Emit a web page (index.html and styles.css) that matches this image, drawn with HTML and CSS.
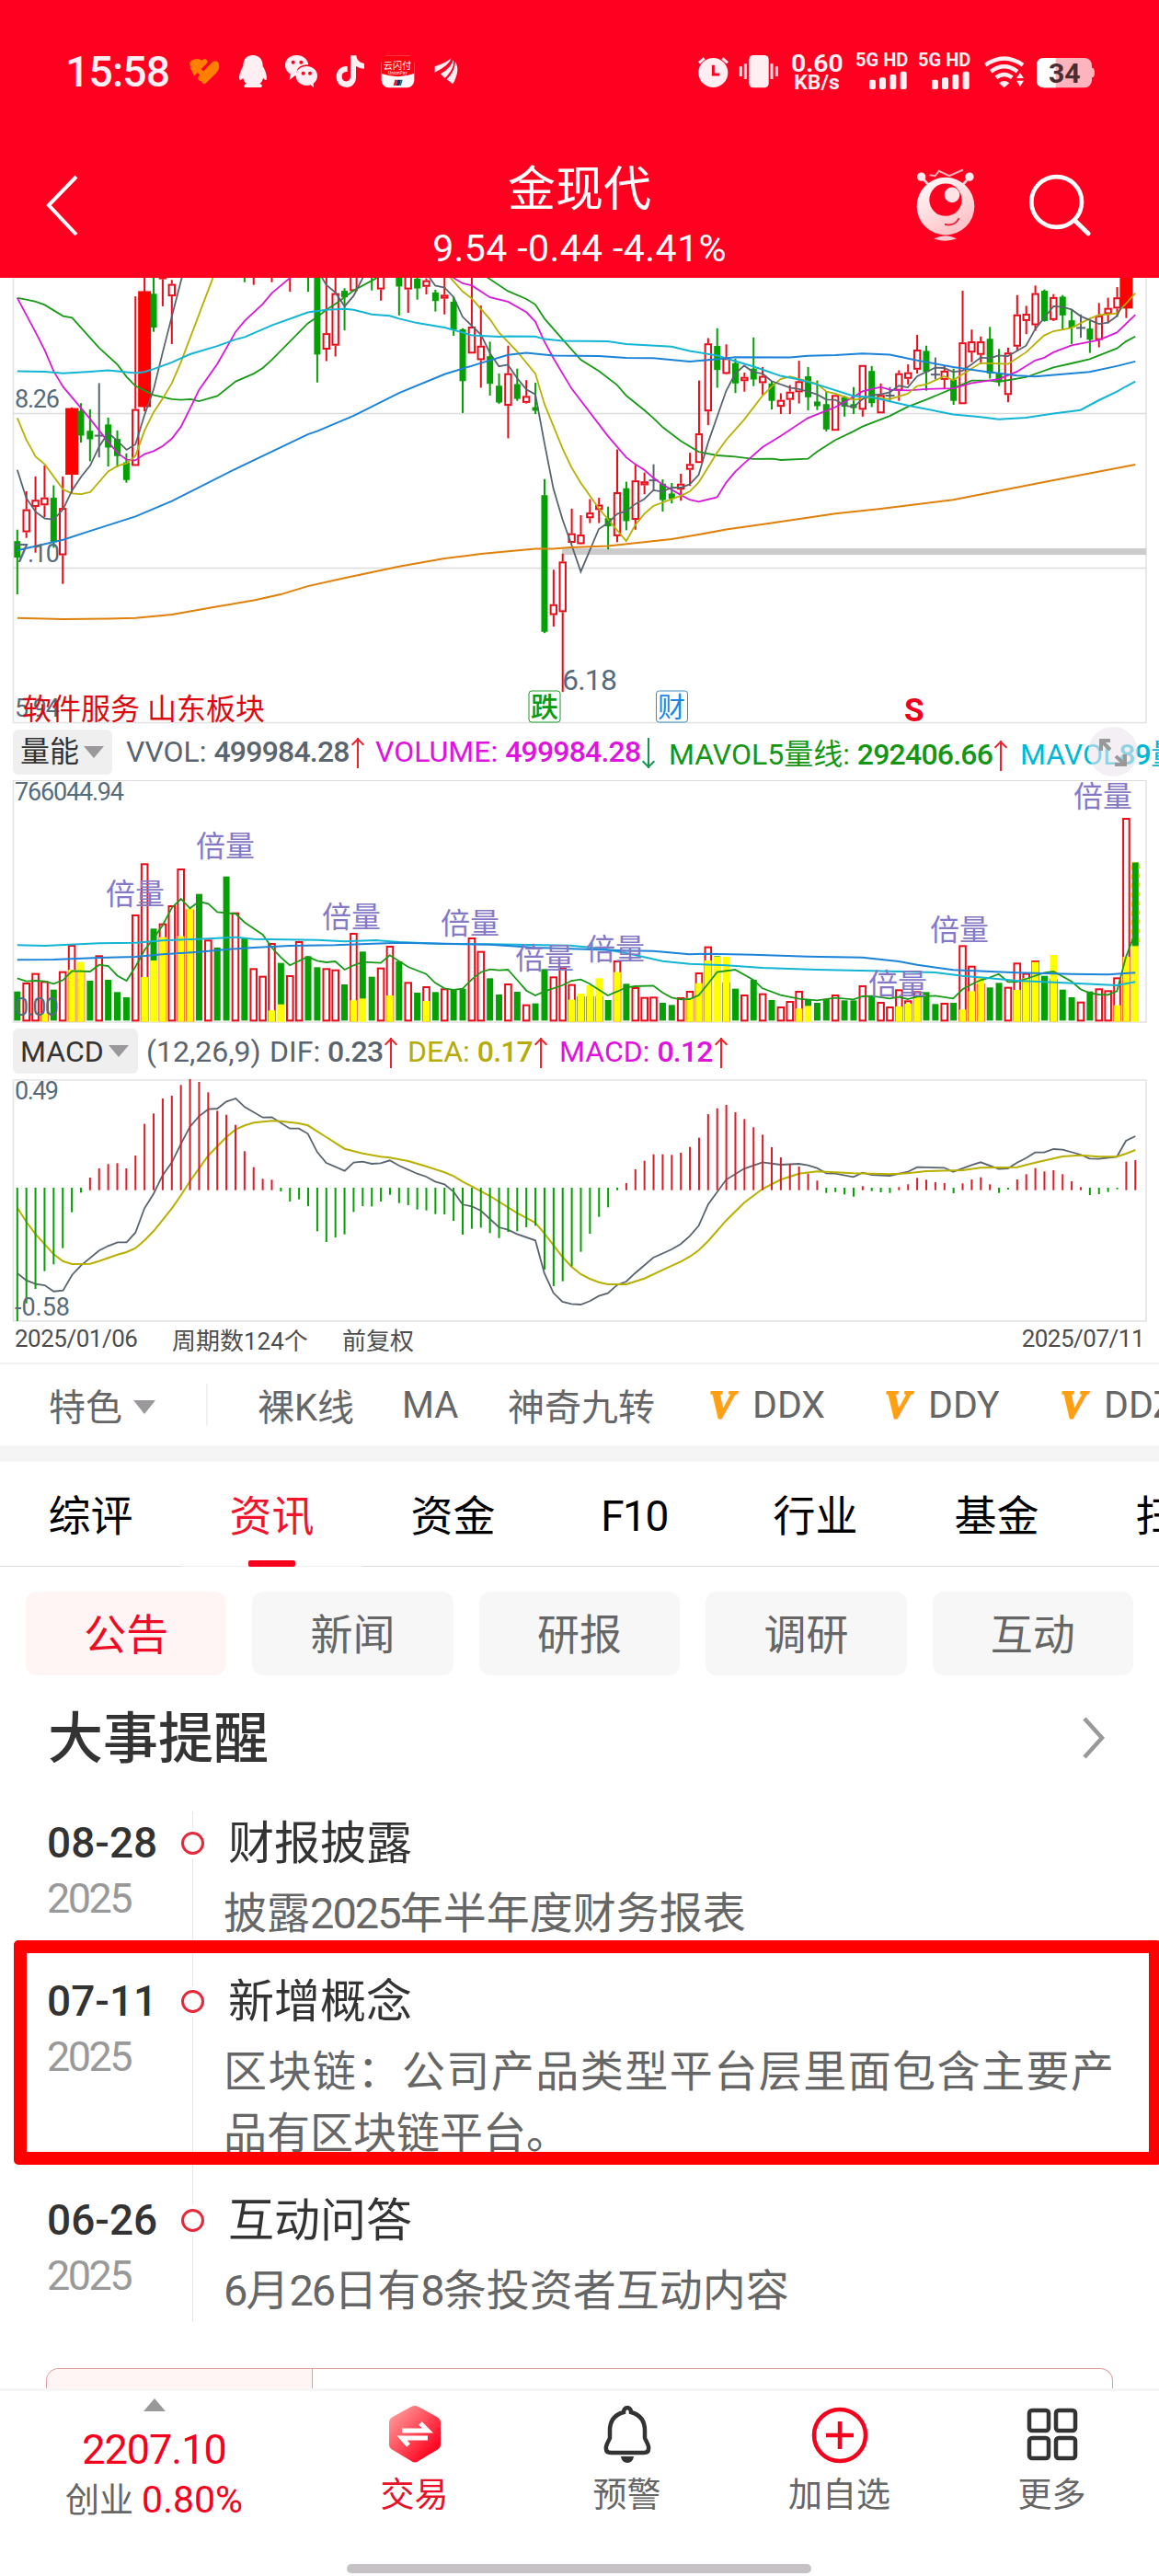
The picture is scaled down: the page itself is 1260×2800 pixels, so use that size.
FILE: index.html
```html
<!DOCTYPE html>
<html lang="zh-CN">
<head>
    <meta charset="utf-8">
    <title>金现代</title>
    <link rel="stylesheet" href="styles.css">
</head>
<body>
    <div class="statusbar">
        <svg class="status-icons" viewBox="0 0 1350 210">
            <text class="clock" x="33" y="146" textLength="342">15:58</text>
            <!-- heart -->
            <g stroke="#ff8000" stroke-width="17" stroke-linecap="round" fill="none">
                <path d="M447 72Q452 66 465 66M449 86Q452 90 456 98L488 66M449 74L484 110M474 120L514 78Q524 66 526 78Q528 88 518 98L486 130"/>
            </g>
            <path d="M440 76Q444 57 466 57L484 64L462 96Q438 92 440 76Z" fill="#ff8000"/>
            <!-- penguin -->
            <path d="M645 45C622 45 613 62 613 80C604 96 597 115 602 126C605 128 610 122 613 119C614 128 619 134 624 138C613 142 614 150 622 150H668C677 150 678 142 667 138C672 134 677 127 678 119C681 123 686 128 689 125C692 113 686 96 677 80C677 60 666 45 645 45Z"/>
            <!-- chat bubbles -->
            <path d="M788 45C766 45 750 59 750 78C750 90 757 100 767 106L764 126L782 112L792 112C780 92 798 75 826 76C824 58 808 45 788 45Z"/>
            <path d="M820 81C800 81 785 95 785 112C785 130 800 144 820 144C825 144 829 143 833 142L843 150L842 137C851 131 855 122 855 112C855 95 840 81 820 81Z"/>
            <g fill="#ff0021"><circle cx="776" cy="68" r="6"/><circle cx="802" cy="68" r="6"/><circle cx="809" cy="104" r="6"/><circle cx="831" cy="104" r="6"/></g>
            <!-- note -->
            <path d="M963 46H982C984 62 994 70 1008 72V89C998 89 989 86 981 80V116C981 162 917 160 917 115C917 92 935 79 953 81V99C941 97 935 104 935 114C935 136 963 135 963 114Z"/>
            <!-- pay app -->
            <rect x="1064" y="46" width="107" height="105" rx="24" fill="#fff"/>
            <path d="M1064 105V70Q1064 46 1088 46H1146Q1171 46 1171 70V105Q1117 124 1064 105Z" fill="#ff0010"/>
            <text class="pay" x="1070" y="91" font-size="30" textLength="92">云闪付</text>
            <text class="pay" x="1086" y="108" font-size="14" font-weight="bold" textLength="62">UnionPay</text>
            <path d="M1108 125H1117L1112 144H1103Z" fill="#e02030"/><path d="M1117 125H1128L1123 144H1112Z" fill="#103060"/><path d="M1128 125H1133L1128 144H1123Z" fill="#107080"/>
            <!-- wing -->
            <path d="M1238 82Q1275 70 1292 54Q1286 78 1238 101Z"/>
            <path d="M1257 106Q1292 86 1298 60Q1306 84 1271 120Z"/>
            <path d="M1277 124Q1304 96 1305 66Q1322 94 1297 139Z"/>
        </svg>
        <svg class="status-icons" viewBox="0 0 1350 210">
            <circle cx="76" cy="102" r="48"/>
            <path d="M30 70L47 55M123 70L106 55" stroke="#ffe8ef" stroke-width="9"/>
            <path d="M76 77V108H97" fill="none" stroke="#ff0021" stroke-width="9"/>
            <rect x="193" y="45" width="64" height="106" rx="14"/>
            <path d="M166 82V114M181 72V123M267 72V123M283 82V114" stroke="#ffd5dd" stroke-width="9"/>
            <text x="330" y="98" font-size="80" textLength="170" lengthAdjust="spacingAndGlyphs">0.60</text>
            <text x="340" y="157" font-size="66" textLength="148" lengthAdjust="spacingAndGlyphs">KB/s</text>
            <text x="540" y="82" font-size="60" textLength="172" lengthAdjust="spacingAndGlyphs">5G HD</text>
            <text x="744" y="82" font-size="60" textLength="172" lengthAdjust="spacingAndGlyphs">5G HD</text>
            <g id="bars">
                <rect x="585" y="125" width="21" height="31" rx="6"/><rect x="618" y="118" width="21" height="38" rx="6"/><rect x="652" y="108" width="21" height="48" rx="6"/><rect x="686" y="98" width="21" height="58" rx="6"/>
            </g>
            <use href="#bars" x="204"/>
            <g fill="none" stroke="#ffeef2" stroke-width="13">
                <path d="M964 77Q1025 34 1086 77M982 98Q1025 66 1068 98M999 118Q1025 98 1051 118"/>
            </g>
            <path d="M1008 136Q1025 122 1042 136L1025 151ZM1065 120L1077 103L1089 120ZM1065 128L1077 147L1089 128Z"/>
            <rect x="1131" y="54" width="180" height="97" rx="24" fill="#ffb3bc"/>
            <path d="M1311 86Q1320 86 1320 102Q1320 118 1311 118Z" fill="#ffb3bc"/>
            <path d="M1193 54V151H1155Q1131 151 1131 127V78Q1131 54 1155 54Z" fill="#fff"/>
            <text x="1170" y="135" font-size="88" textLength="104" lengthAdjust="spacingAndGlyphs" class="battery">34</text>
        </svg>
    </div>

    <div class="header">
        <svg class="back" width="40" height="70" viewBox="0 0 40 70"><path d="M35 3L5 34L35 66" fill="none" stroke="#fff" stroke-width="4"/></svg>
        <div class="stock">
            <div class="stock-name">金现代</div>
            <div class="stock-price">9.54 -0.44 -4.41%</div>
        </div>
        <svg class="tools" viewBox="720 400 600 260">
            <defs>
                <linearGradient id="robot" x1="0" y1="0" x2=".6" y2="1"><stop offset="0" stop-color="#fff"/><stop offset="1" stop-color="#ffc2c6"/></linearGradient>
            </defs>
            <path d="M756 443L778 468M912 443L890 468" stroke="#ffd5dc" stroke-width="8"/>
            <circle cx="755" cy="442" r="14" fill="#ffe9ec"/><circle cx="912" cy="442" r="14" fill="#ffe9ec"/>
            <path d="M782 436L800 439L812 423L846 439L891 419" fill="none" stroke="#ffb0b8" stroke-width="6"/>
            <circle cx="834" cy="538" r="94" fill="url(#robot)"/>
            <circle cx="834" cy="517" r="53" fill="#ff0021"/>
            <circle cx="855" cy="501" r="25" fill="#ffe3e6"/>
            <path d="M831 597Q864 605 878 577" fill="none" stroke="#f0203c" stroke-width="6"/>
            <path d="M796 644Q834 624 870 644Q834 657 796 644Z" fill="#ffc8ce"/>
            <circle cx="1196" cy="524" r="82" fill="none" stroke="#fff" stroke-width="14"/>
            <path d="M1255 584L1299 627" stroke="#fff" stroke-width="15" stroke-linecap="round"/>
        </svg>
    </div>

    <svg id="price" class="chart" width="1260" height="486"></svg>

    <div class="indicator">
        <div class="picker">量能<i class="down"></i></div>
        <div class="value slate w1">VVOL: <b>499984.28</b><i class="up"></i></div>
        <div class="value magenta w2">VOLUME: <b>499984.28</b><i class="up fall"></i></div>
        <div class="value green w3">MAVOL5量线: <b>292406.66</b><i class="up"></i></div>
        <div class="value cyan">MAVOL<b>89</b>量线</div>
        <div class="expand">
            <svg width="54" height="54" viewBox="0 0 54 54"><g fill="none" stroke="#999" stroke-width="4"><path d="M24 15H14V26M14 15L24 25M30 32L40 41M29 41H40V30"/></g></svg>
        </div>
    </div>

    <svg id="volume" class="chart" width="1260" height="264"></svg>

    <div class="indicator macd-row">
        <div class="picker">MACD<i class="down"></i></div>
        <div class="value slate m0">(12,26,9)</div>
        <div class="value slate m1">DIF: <b>0.23</b><i class="up"></i></div>
        <div class="value olive m2">DEA: <b>0.17</b><i class="up"></i></div>
        <div class="value magenta">MACD: <b>0.12</b><i class="up"></i></div>
    </div>

    <svg id="macd" class="chart" width="1260" height="265"></svg>

    <div class="dates">
        <span class="d1">2025/01/06</span>
        <span class="d2">周期数124个</span>
        <span>前复权</span>
        <span class="last">2025/07/11</span>
    </div>

    <div class="features">
        <div class="feature-pick">特色<i class="down big"></i></div>
        <span class="f1">裸K线</span>
        <span class="f2">MA</span>
        <span class="f3">神奇九转</span>
        <span class="ddx"><i class="v">V</i>DDX</span>
        <span class="ddx"><i class="v">V</i>DDY</span>
        <span class="ddx"><i class="v">V</i>DDZ</span>
    </div>

    <div class="tabs">
        <div class="tab">综评</div>
        <div class="tab active">资讯</div>
        <div class="tab">资金</div>
        <div class="tab f10">F10</div>
        <div class="tab">行业</div>
        <div class="tab">基金</div>
        <div class="tab">扫雷</div>
    </div>

    <div class="chips">
        <div class="chip on">公告</div>
        <div class="chip">新闻</div>
        <div class="chip">研报</div>
        <div class="chip">调研</div>
        <div class="chip">互动</div>
    </div>

    <div class="section-title">
        <span>大事提醒</span>
        <svg width="26" height="46" viewBox="0 0 26 46"><path d="M3 2L22 23L3 44" fill="none" stroke="#999" stroke-width="4.5"/></svg>
    </div>

    <div class="timeline">
        <div class="event e1">
            <div class="when">08-28<small>2025</small></div>
            <div class="what"><h3>财报披露</h3><p>披露<span>2025</span>年半年度财务报表</p></div>
        </div>
        <div class="event e2">
            <div class="when">07-11<small>2025</small></div>
            <div class="what"><h3>新增概念</h3><p>区块链：公司产品类型平台层里面包含主要产品有区块链平台。</p></div>
            <div class="highlight"></div>
        </div>
        <div class="event e3">
            <div class="when">06-26<small>2025</small></div>
            <div class="what"><h3>互动问答</h3><p><span>6</span>月<span>26</span>日有<span>8</span>条投资者互动内容</p></div>
        </div>
    </div>

    <div class="card"><div class="card-side"></div></div>

    <div class="nav">
        <div class="index">
            <i class="tri"></i>
            <div class="points">2207.10</div>
            <div class="change">创业 <span>0.80%</span></div>
        </div>
        <div class="nav-item trade">
            <svg width="70" height="70" viewBox="0 0 70 70">
                <defs><linearGradient id="hex" x1="0" y1="0" x2="1" y2="1"><stop offset=".1" stop-color="#ff9898"/><stop offset=".8" stop-color="#ff0a24"/></linearGradient></defs>
                <path d="M31 5Q35 3 39 5L59 16Q63 18 63 22V46Q63 50 59 52L39 64Q35 67 31 64L11 52Q7 50 7 46V22Q7 18 11 16Z" fill="url(#hex)"/>
                <path d="M21 31H49L41 23M49 39H21L28 47" fill="none" stroke="#fff" stroke-width="5"/>
            </svg>
            交易
        </div>
        <div class="nav-item">
            <svg width="70" height="70" viewBox="0 0 70 70">
                <path d="M35 6C32 6 31 9 31 11C20 14 16 22 16 31V39C14 44 11 47 12 51C12 54 14 55 17 55H53C56 55 58 54 58 51C59 47 56 44 54 39V31C54 22 50 14 39 11C39 9 38 6 35 6Z" fill="none" stroke="#333" stroke-width="4.5"/>
                <path d="M28 59H42Q41 66 35 66Q29 66 28 59Z" fill="#333"/>
            </svg>
            预警
        </div>
        <div class="nav-item">
            <svg width="70" height="70" viewBox="0 0 70 70"><g fill="none" stroke="#f5001d" stroke-width="4.5"><circle cx="35" cy="36" r="28"/><path d="M35 21V51M20 36H50"/></g></svg>
            加自选
        </div>
        <div class="nav-item">
            <svg width="70" height="70" viewBox="0 0 70 70"><g fill="none" stroke="#333" stroke-width="4.5"><rect x="10" y="9" width="21" height="22" rx="3"/><rect x="39" y="9" width="21" height="22" rx="3"/><rect x="10" y="39" width="21" height="22" rx="3"/><rect x="39" y="39" width="21" height="22" rx="3"/></g></svg>
            更多
        </div>
    </div>
    <div class="homebar"></div>

    <script src="charts.js"></script>
</body>
</html>
```
FILE: styles.css
```css
*, *::before, *::after {
    box-sizing: border-box;
}

body {
    margin: 0;
    width: 1260px;
    height: 2800px;
    overflow: hidden;
    background: #fff;
    color: #333;
    font-family: Roboto, "Noto Sans CJK SC", sans-serif;
}

i {
    font-style: normal;
}

/* status bar */
.statusbar {
    height: 120px;
    background: #ff0021;
    display: flex;
    gap: 240px;
    padding: 45px 0 0 60px;
}

.status-icons {
    width: 450px;
    height: 70px;
    flex: none;
    fill: #ffeef2;
    font-weight: 700;
}

.clock {
    font-size: 139px;
    font-weight: 500;
}

.pay {
    fill: #fff;
    font-weight: 400;
}

.battery {
    fill: #4a2d30;
}

/* header */
.header {
    height: 182px;
    background: #ff0021;
    color: #fff;
    display: grid;
    grid-template-columns: 330px 1fr 330px;
}

.back {
    margin: 69px 0 0 48px;
}

.stock {
    text-align: center;
}

.stock-name {
    font-size: 52px;
    line-height: 60px;
    margin-top: 57px;
}

.stock-price {
    font-size: 41px;
    line-height: 50px;
    margin-top: 8px;
    letter-spacing: .4px;
    white-space: nowrap;
}

.tools {
    width: 200px;
    height: 87px;
    margin: 58px 0 0 60px;
}

/* charts */
.chart {
    display: block;
}

.axis {
    fill: #566b7c;
    font-size: 27px;
}

.double {
    fill: #8578c6;
    font-size: 32px;
    text-anchor: middle;
}

.indicator {
    position: relative;
    height: 60px;
    padding: 0 0 2px 14px;
    display: flex;
    align-items: center;
    font-size: 32px;
    overflow: hidden;
    white-space: nowrap;
}

.macd-row {
    height: 61px;
    padding-bottom: 0;
}

.picker {
    width: 108px;
    height: 49px;
    flex: none;
    margin-right: 15px;
    padding-left: 8px;
    border-radius: 6px;
    background: #efefef;
    font-size: 32px;
    line-height: 48px;
    display: flex;
    align-items: center;
}

.macd-row .picker {
    width: 136px;
    margin-right: 9px;
}

.down {
    border: 11px solid transparent;
    border-top: 13px solid #9b989b;
    border-bottom: 0;
    margin-left: 5px;
}

.down.big {
    border-width: 15px 12px 0;
    margin: 5px 0 0 12px;
}

.value {
    flex: none;
}

.value b {
    font-weight: 500;
    letter-spacing: -.8px;
}

.w1 { width: 271px; }
.w2 { width: 319px; }
.w3 { width: 382px; }
.m0 { width: 134px; }
.m1 { width: 150px; }
.m2 { width: 165px; }

.slate { color: #5a646f; }
.magenta { color: #e012e0; }
.green { color: #149614; }
.cyan { color: #00b8d4; }
.olive { color: #b5ac0a; }

/* thin arrow behind each reading */
.up {
    display: inline-block;
    position: relative;
    width: 2px;
    height: 33px;
    margin-left: 8px;
    vertical-align: -7px;
    background: #f0202c;
}

.up::before {
    content: "";
    position: absolute;
    left: -4px;
    top: 2px;
    width: 10px;
    height: 10px;
    border: 2px solid #f0202c;
    border-width: 2px 0 0 2px;
    transform: rotate(45deg);
}

.fall {
    background: #149650;
    transform: rotate(180deg);
}

.fall::before {
    border-color: #149650;
}

.expand {
    position: absolute;
    left: 1183px;
    top: 2px;
    width: 54px;
    height: 54px;
    border-radius: 50%;
    background: rgba(236, 228, 236, .6);
}

.dates {
    height: 43px;
    padding: 0 16px 9px 16px;
    display: flex;
    align-items: center;
    font-size: 26px;
    color: #4d4d4d;
}

.d1 {
    width: 171px;
    letter-spacing: -.5px;
}

.d2 {
    width: 185px;
}

.last {
    margin-left: auto;
    letter-spacing: -.5px;
}

/* feature row */
.features {
    height: 90px;
    border-top: 2px solid #f2f2f2;
    display: flex;
    align-items: center;
    font-size: 40px;
    color: #666;
    white-space: nowrap;
    overflow: hidden;
}

.feature-pick {
    width: 226px;
    height: 46px;
    padding-left: 53px;
    margin-right: 54px;
    border-right: 2px solid #f2f2f2;
    display: flex;
    align-items: center;
    flex: none;
}

.f1 { width: 157px; flex: none; }
.f2 { width: 115px; flex: none; }
.f3 { width: 219px; flex: none; }

.ddx {
    width: 191px;
    flex: none;
    font-size: 41px;
}

.v {
    display: inline-block;
    width: 47px;
    color: #ffa014;
    font: italic bold 42px "Liberation Serif", serif;
    -webkit-text-stroke: 2px #ffa014;
}

/* tabs */
.tabs {
    height: 132px;
    border-top: 18px solid #f5f5f5;
    display: flex;
    overflow: hidden;
}

.tab {
    position: relative;
    width: 197px;
    flex: none;
    border-bottom: 1px solid #ddd;
    text-align: center;
    font-size: 46px;
    line-height: 118px;
    color: #000;
}

.f10 {
    letter-spacing: -1.5px;
}

.active {
    color: #f0142c;
    border-color: #f0f0f0;
}

.active::after {
    content: "";
    position: absolute;
    left: 73px;
    bottom: -1px;
    width: 51px;
    height: 7px;
    border-radius: 2px;
    background: #f5001d;
}

.chips {
    padding: 27px 28px 0;
    display: grid;
    grid-template-columns: repeat(5, 1fr);
    gap: 28px;
}

.chip {
    height: 91px;
    border-radius: 12px;
    background: #f7f7f7;
    color: #666;
    text-align: center;
    font-size: 46px;
    line-height: 95px;
}

.chip.on {
    background: #fff5f5;
    color: #ee0c24;
}

.section-title {
    height: 136px;
    padding: 0 58px 0 52px;
    display: flex;
    align-items: center;
    justify-content: space-between;
    font-size: 60px;
    font-weight: 500;
}

.section-title span {
    margin-top: -9px;
}

/* events */
.event {
    position: relative;
    display: flex;
    padding-left: 51px;
}

.e1 { height: 172px; margin-top: 12px; }
.e2 { height: 238px; }
.e3 { height: 145px; }

.when {
    width: 158px;
    font-size: 46px;
    font-weight: 500;
    line-height: 68px;
}

.when small {
    display: block;
    font-size: 45px;
    font-weight: 400;
    line-height: 54px;
    letter-spacing: -2.5px;
    color: #999;
}

.what {
    position: relative;
    flex: 1;
    padding-left: 33px;
    border-left: 1px solid #e6e6e6;
}

/* hollow dot on the line */
.what::before {
    content: "";
    position: absolute;
    left: -13px;
    top: 22px;
    width: 25px;
    height: 25px;
    border: 3px solid #e8283a;
    border-radius: 50%;
    background: #fff;
    box-shadow: 0 0 0 4px #fff;
}

.what h3 {
    margin: 0 0 0 5px;
    font-size: 50px;
    font-weight: 400;
    line-height: 70px;
}

.what p {
    width: 968px;
    margin: 7px 0 0;
    font-size: 47px;
    line-height: 67px;
    color: #666;
    text-align: justify;
}

.what p span {
    letter-spacing: -2px;
}

.highlight {
    position: absolute;
    left: 15px;
    top: -32px;
    width: 1248px;
    height: 244px;
    border: 14px solid #f00;
    border-radius: 5px;
}

.card {
    height: 22px;
    margin: 50px 50px 0;
    border: 1px solid #e0a0a0;
    border-bottom: 0;
    border-radius: 14px 14px 0 0;
    overflow: hidden;
}

.card-side {
    width: 289px;
    height: 22px;
    background: #fff5f5;
    border-right: 1px solid #e0a0a0;
}

/* bottom bar */
.nav {
    height: 191px;
    border-top: 3px solid #f5f5f5;
    display: flex;
    background: #fff;
}

.index {
    width: 335px;
    text-align: center;
}

.tri {
    display: block;
    width: 0;
    margin: 8px auto 0;
    border: 12px solid transparent;
    border-bottom: 14px solid #999;
    border-top: 0;
}

.points {
    margin-top: 14px;
    font-size: 45px;
    line-height: 56px;
    letter-spacing: -1px;
    color: #f5001d;
}

.change {
    font-size: 37px;
    line-height: 52px;
    color: #666;
}

.change span {
    font-size: 41px;
    color: #f5001d;
}

.nav-item {
    width: 231px;
    padding-top: 12px;
    display: flex;
    flex-direction: column;
    align-items: center;
    font-size: 37px;
    line-height: 64px;
    color: #666;
}

.trade {
    color: #e8102a;
}

.homebar {
    width: 505px;
    height: 10px;
    margin-left: 377px;
    border-radius: 5px;
    background: #c6c1c4;
}
```
FILE: charts.js
```js
const RED = "#ea0a18", GREEN = "#04a004", SLATE = "#5a646f";
const X0 = 18.8, STEP = 9.882;
const barX = i => X0 + STEP * i;

function add(svg, tag, attrs, text) {
    const el = document.createElementNS("http://www.w3.org/2000/svg", tag);
    for (const k in attrs) el.setAttribute(k, attrs[k]);
    if (text) el.textContent = text;
    svg.appendChild(el);
    return el;
}

function rect(svg, x, y, w, h, fill, extra) {
    add(svg, "rect", Object.assign({ x: x, y: y, width: w, height: h, fill: fill }, extra));
}

// "x,y x,y ..." with x in 1/2.45 px steps, y goes through the panel's scale
function line(svg, y, color, points, width) {
    const pts = points.trim().split(/\s+/).map(p => {
        const [a, b] = p.split(",").map(Number);
        return (a / 2.45).toFixed(1) + "," + y(b).toFixed(1);
    });
    add(svg, "polyline", { points: pts.join(" "), fill: "none", stroke: color, "stroke-width": width || 1.8 });
}

function frame(svg, top, bottom) {
    add(svg, "path", { d: `M14.5 ${top}V${bottom}H1246V${top}`, fill: "none", stroke: "#e2e2e2", "stroke-width": 1.5 });
}

// ---------- price ----------
const price = document.getElementById("price");
const py = v => v / 2.8 - 12;
frame(price, -2, 483.5);
add(price, "path", { d: "M14 147.5H1246M14 315.5H1246", stroke: "#dcdcdc", "stroke-width": 1.4 });
rect(price, 611, py(857), 635, 7, "#ccc");

// type high top bottom low, starting at the given bar
const candles = {
    0: "g 800 835 885 997;r 683 738 808 825;r 638 709 731 870;r 605 702 726 762;g 665 703 838 855;r 638 734 878 965;b 428 430 633 690;g 415 438 514 535;g 434 499 525 592;d 354 514 514 580;g 459 480 550 608;g 498 524 576 610;g 568 595 649 657;r 90 433 606 606;b 20 74 427 440;g 20 82 185 198;r 20 20 38 120;r 40 52 90 235",
    25: "g 0 0 20 47;r 0 0 20 55",
    28: "r 0 0 20 47",
    30: "r 0 0 20 76",
    32: "g 0 0 20 76;g 0 0 267 352;r 20 202 252 287;r 20 80 240 273;g 65 73 93 193;r 0 0 74 74",
    39: "g 0 0 20 72;r 0 0 69 103",
    42: "g 0 0 60 148;r 0 0 69 140;g 20 36 66 100;r 35 41 61 84;g 70 78 104 136;r 20 85 97 145;g 90 106 192 210;g 187 190 348 445;r 20 182 264 264;r 118 240 284 368;g 228 272 356 392;g 325 362 413 417;r 240 324 423 522;g 310 357 402 408;r 345 393 414 416;g 353 427 438 448;g 646 695 1111 1115;r 922 1027 1060 1095;r 873 897 1051 1294;r 736 811 840 841;r 756 815 844 845",
    63: "r 707 748 765 780;r 703 724 740 780;g 730 765 790 860;r 556 686 820 838;g 654 674 774 802;r 603 650 770 800;r 626 653 665 692;d 601 650 650 680;g 647 660 710 745;g 658 690 706 720;r 630 660 678 712;r 566 600 618 667;r 346 507 597 597;r 217 233 440 482;g 187 241 314 368;r 236 278 326 328;g 280 293 355 384;r 322 335 348 380;g 215 310 343 363;r 305 332 354 390;g 350 355 408 434;r 385 405 426 448;r 360 380 405 448;r 286 348 382 416;g 305 333 397 437;g 346 410 424 436;g 378 418 495 501;r 390 390 499 499;g 392 397 426 456;g 366 418 430 448;r 299 299 435 456;g 302 317 415 427;r 355 390 446 446;d 366 392 392 412;r 315 324 377 408;r 297 321 341 358;r 207 252 313 325;g 240 256 320 377;d 276 328 328 343;r 300 316 344 370;g 310 343 408 420;r 73 230 418 418;r 191 227 261 290;r 212 227 268 296;g 183 219 325 340;g 250 325 350 363;r 246 261 390 412;r 86 145 243 255;r 119 143 165 205;r 57 80 178 195;g 69 73 165 167;r 83 92 162 165;g 86 91 148 192;g 130 163 185 235;d 145 186 186 216;g 165 188 222 262;r 110 148 223 245;r 94 125 144 172;r 62 93 127 152;b 0 0 127 156"
};

for (const start in candles) {
    candles[start].split(";").forEach((c, n) => {
        const [type, ...v] = c.split(" ");
        const [hi, top, bottom, lo] = v.map(s => py(+s));
        const x = barX(+start + n);
        if (type === "r") {
            rect(price, x - 1, hi, 2, top - hi, RED);
            rect(price, x - 1, bottom, 2, lo - bottom, RED);
            rect(price, x - 3.2, top + 1, 6.4, Math.max(bottom - top - 2, 1), "#fff", { stroke: RED, "stroke-width": 2 });
        } else if (type === "g") {
            rect(price, x - 1, hi, 2, lo - hi, GREEN);
            rect(price, x - 3.5, top, 7, bottom - top, GREEN);
        } else if (type === "b") {
            rect(price, x - 1, hi, 2, lo - hi, RED);
            rect(price, x - 7, top, 14, bottom - top, "#f00");
        } else {
            rect(price, x - 1, hi, 2, lo - hi, SLATE);
            rect(price, x - 5, top - 1, 10, 2, SLATE);
        }
    });
}

line(price, py, "#189a18", "46,95 70,100 95,106 119,116 168,150 192,155 264,247 313,298 337,335 361,363 409,390 458,403 482,405 508,403 530,409 579,393 628,349 676,325 700,308 724,283 820,172 845,153 869,131 893,113 942,72 1000,36 1040,0");
line(price, py, "#189a18", "1260,0 1300,34 1353,74 1402,98 1426,115 1450,157 1498,220 1547,283 1595,317 1644,360 1668,392 1716,436 1740,460 1765,488 1813,530 1861,563 1910,574 1958,578 2006,585 2059,584 2079,588 2152,584 2176,563 2225,527 2273,501 2297,486 2370,454 2418,426 2470,403 2539,370 2588,346 2636,346 2660,350 2733,336 2806,306 2854,294 2902,281 2975,248 2999,227 3024,212");
line(price, py, "#d81ad8", "46,95 95,200 119,254 143,318 168,365 240,463 288,533 313,566 337,587 361,589 385,570 409,561 433,546 458,523 482,487 506,432 530,375 579,295 628,197 652,164 700,113 724,80 770,36 810,0");
line(price, py, "#d81ad8", "1180,10 1208,34 1232,50 1257,57 1305,93 1353,106 1402,138 1426,167 1450,227 1474,278 1522,370 1619,515 1668,580 1692,601 1716,618 1740,642 1765,663 1813,694 1837,709 1861,715 1910,701 1934,657 1958,624 1982,598 2031,549 2079,515 2152,460 2201,438 2225,427 2273,396 2297,379 2346,366 2370,374 2418,376 2470,372 2539,370 2588,354 2660,342 2709,319 2757,285 2781,277 2806,260 2854,239 2927,223 2975,200 3024,146");
line(price, py, "#b8b000", "46,460 70,526 95,578 119,601 168,678 192,690 216,692 240,686 288,623 313,606 337,598 361,575 385,499 409,443 433,402 458,354 482,290 567,34 577,0");
line(price, py, "#b8b000", "1175,0 1200,34 1232,75 1257,97 1305,160 1329,200 1377,257 1426,325 1450,417 1498,552 1522,610 1547,658 1595,735 1668,835 1692,786 1716,752 1740,728 1813,697 1837,684 1861,656 1910,566 1934,527 1982,465 2031,392 2055,365 2079,342 2104,334 2176,356 2201,380 2225,386 2273,405 2322,397 2370,403 2418,386 2443,363 2467,358 2515,333 2539,345 2612,293 2685,296 2733,260 2781,209 2806,196 2854,186 2902,158 2927,147 2975,142 2999,112 3024,80");
line(price, py, SLATE, "46,618 70,704 95,746 119,766 143,769 168,738 192,680 216,639 240,605 264,547 288,505 313,530 337,557 361,540 385,451 409,374 433,262 458,150 484,34 492,0");
line(price, py, SLATE, "840,0 858,34 869,55 893,78 918,120 942,88 966,34 975,0");
line(price, py, SLATE, "1130,10 1145,34 1159,57 1184,63 1208,92 1232,152 1281,207 1305,263 1329,303 1353,298 1377,338 1402,373 1426,388 1450,535 1474,675 1498,768 1522,845 1547,928 1595,798 1619,780 1644,752 1668,744 1692,722 1716,707 1740,680 1765,684 1789,672 1813,672 1837,662 1861,633 1886,535 1934,378 1958,325 1982,301 2006,320 2031,325 2055,348 2104,368 2128,372 2176,388 2201,404 2225,405 2249,422 2273,427 2297,403 2322,390 2346,388 2370,382 2394,362 2418,367 2443,333 2491,307 2515,308 2539,320 2564,316 2588,297 2612,276 2636,278 2660,270 2685,272 2733,240 2757,190 2806,120 2830,122 2854,130 2878,150 2927,174 2951,170 2975,150 2987,120");
line(price, py, "#12b6d4", "46,318 119,319 168,324 240,319 288,315 361,323 385,320 409,311 458,291 506,266 579,241 628,221 652,214 724,178 820,139 869,131 918,128 942,131 990,145 1038,149 1063,158 1111,171 1184,185 1232,200 1257,209 1329,213 1353,211 1426,212 1450,220 1498,225 1619,227 1668,235 1789,243 1837,256 1910,270 1958,287 2006,303 2031,313 2079,332 2128,343 2176,358 2273,393 2322,397 2418,422 2539,449 2612,457 2660,464 2733,459 2806,447 2878,436 2927,406 2975,380 2999,364 3024,349", 2);
line(price, py, "#1c84d8", "46,863 168,831 240,804 361,760 458,713 628,615 820,510 845,500 942,453 1063,384 1184,327 1281,293 1353,268 1402,262 1474,270 1595,272 1668,277 1740,278 1837,288 1910,281 1958,275 2104,276 2152,271 2225,269 2297,264 2370,267 2443,285 2539,305 2612,317 2709,331 2757,334 2830,327 2902,320 2975,302 3024,288", 2);
line(price, py, "#e0800a", "46,1069 168,1072 288,1071 361,1069 458,1058 579,1034 676,1015 748,997 820,972 918,947 1063,912 1184,888 1281,874 1426,858 1474,858 1519,854 1619,850 1789,829 1861,815 1934,799 2055,780 2225,751 2346,736 2539,709 2806,650 3024,602", 2);

add(price, "text", { class: "axis", x: 16, y: 141, textLength: 49 }, "8.26");
add(price, "text", { class: "axis", x: 16, y: 309, textLength: 49 }, "7.10");
add(price, "text", { class: "axis", x: 16, y: 477, textLength: 49 }, "5.94");
add(price, "text", { class: "axis", x: 611, y: 448, textLength: 60, style: "font-size:32px" }, "6.18");
add(price, "text", { x: 24, y: 480, "font-size": 32, fill: "#dc0a10", textLength: 264 }, "软件服务 山东板块");
rect(price, 575, 449, 34, 34, "#fff", { rx: 3, stroke: "#1c9c2c" });
add(price, "text", { x: 577, y: 477, "font-size": 30, "font-weight": 500, fill: "#0c9a10" }, "跌");
rect(price, 713.5, 449, 34, 34, "#fff", { rx: 3, stroke: "#3c8cc0" });
add(price, "text", { x: 715, y: 477, "font-size": 30, fill: "#1888e8" }, "财");
add(price, "text", { x: 983, y: 482, "font-size": 35, "font-weight": 700, fill: "#f0001c" }, "S");

// ---------- volume ----------
const volume = document.getElementById("volume");
const vy = v => v / 3 - 68;
frame(volume, 0.5, 263);
add(volume, "path", { d: "M14 .5H1246", stroke: "#ddd" });

// colour + top, "/" + top of the yellow part
const vols = ("g893 r867 r836 r862/965 g887 r830 r744/822 r830/797 g858 r778 g855 g895 g912 r645 r478/846 g688/792 r674/716 r615 r495/713 r628/622 g575 r727 g750 g518 r638 g720 r820 r845 r738/955 g800/935 r843 r732 g778 g814 r820 r824 g870 r705/922 g763/916 g845 r818 r747/906 g795 r865 g897 r879/924 g895 r886 g885 g884 r720 r764 g850 g903 r870 g894 r938 g932 g820 r847 r818 r872/920 r912/900 " +
    "r912/873 r912/850 g921 r795/830 g868 r882 r914 r913 g930 g937 r915 r894/914 r834/866 r749/792 g778/780 r866/780 g884 r906 g855 r902 g921 r945 r927 r894/949 g921/940 g930 g918 r906 g922 g922 r876 g908 r930 r945 r889/942 r925/933 r895/912 g895 g934 r933 g930 r745/952 r812/892 r870/845 g880 g865 r881 r802/888 r836/850 r795/797 g842 r856/774 g887 g912 r929 g893 r886 r892 r850/938 r330/780 g472/745").split(" ");
vols.forEach((s, i) => {
    const [top, yellow] = s.slice(1).split("/").map(Number);
    const x = barX(i), y = vy(top);
    if (s[0] === "r")
        rect(volume, x - 3.3, y, 6.6, vy(988) - y, "#fff", { stroke: RED, "stroke-width": 2 });
    else
        rect(volume, x - 3.5, y, 7, vy(988) - y, GREEN);
    if (yellow)
        rect(volume, x - 3.8, vy(yellow), 7.6, vy(992) - vy(yellow), "#ff0");
});
rect(volume, barX(123) - 4, vy(472), 8, vy(745) - vy(472), "none", { stroke: "#c8c800", "stroke-dasharray": "5 5" });

line(volume, vy, "#189a18", "46,850 70,860 95,858 119,860 143,868 168,856 192,826 240,828 264,806 288,810 313,842 337,858 361,812 385,758 409,720 433,678 458,620 482,591 506,622 530,600 555,607 579,634 628,640 652,668 700,708 724,750 748,782 772,808 820,780 845,793 869,798 893,795 918,822 942,808 966,797 1014,800 1038,775 1087,813 1135,836 1159,865 1184,883 1208,888 1232,884 1257,853 1281,830 1305,821 1329,824 1353,822 1377,855 1402,890 1426,906 1450,893 1498,873 1522,858 1547,854 1568,866 1619,906 1644,893 1668,880 1692,876 1740,874 1765,897 1789,913 1813,919 1837,918 1861,905 1886,868 1910,830 1958,822 2006,855 2031,883 2079,905 2128,917 2176,922 2225,914 2273,919 2297,909 2322,908 2370,916 2394,911 2418,918 2443,910 2491,907 2539,916 2564,886 2588,870 2612,856 2636,848 2660,836 2685,862 2709,861 2733,852 2781,832 2806,828 2854,860 2878,886 2902,898 2927,903 2951,904 2975,892 2999,780 3024,700");
line(volume, vy, "#12b6d4", "46,742 119,744 264,736 361,734 433,727 555,721 628,716 676,722 845,725 918,730 1000,726 1063,732 1184,738 1305,739 1519,743 1595,752 1668,768 1765,794 1837,803 1934,808 2031,816 2176,822 2322,826 2491,831 2564,842 2636,850 2709,858 2781,862 2975,873 3024,862", 2);
line(volume, vy, "#1c84d8", "46,790 143,789 264,783 361,780 433,772 530,764 603,756 676,750 772,744 893,742 1063,734 1184,737 1305,740 1426,750 1519,754 1668,760 1740,761 1837,772 1886,770 2006,773 2152,779 2297,782 2394,795 2443,806 2539,823 2709,832 2854,836 2951,838 3024,832", 2);

[[245, 72], [147, 124], [382, 149], [511, 156], [592, 194], [669, 184], [976, 222], [1043, 163], [1199, 18]].forEach(p =>
    add(volume, "text", { class: "double", x: p[0], y: p[1] + 11 }, "倍量"));
add(volume, "text", { class: "axis", x: 16, y: 22, textLength: 119 }, "766044.94");
add(volume, "text", { class: "axis", x: 16, y: 256, textLength: 48 }, "0.00");

// ---------- macd ----------
const macd = document.getElementById("macd");
const my = v => v / 3 - 53;
frame(macd, 0.5, 263);
add(macd, "path", { d: "M14 1H1246", stroke: "#eaeaea", "stroke-width": 2 });

const hist = [948, 890, 843, 785, 763, 710, 593, 529, 480, 450, 436, 433, 450, 408, 305, 271, 222, 213, 178, 158, 168, 202, 262, 275, 308, 394, 446, 484, 487, 525, 558, 551, 573, 655, 690, 675, 665, 592, 573, 574, 558, 536, 563, 570, 584, 587, 599, 600, 621, 666, 647, 643, 661, 677, 657, 655, 642, 637, 780, 834, 818, 769, 722, 663, 608, 577, 521, 498, 453, 425, 404, 404, 406, 399, 380, 350, 273, 254, 243, 267, 289, 316, 340, 381, 414, 436, 444, 467, 490, 530, 527, 535, 542, 508, 524, 528, 530, 511, 502, 481, 487, 495, 498, 531, 499, 486, 479, 502, 530, 519, 486, 469, 449, 460, 456, 469, 492, 511, 537, 534, 527, 518, 428, 423];
line(macd, my, SLATE, "46,792 70,815 95,827 119,831 143,851 168,848 192,797 216,766 264,718 288,703 313,691 337,691 361,659 385,580 409,533 433,473 458,430 482,370 506,314 530,280 555,257 579,255 603,232 628,222 652,250 700,284 724,283 772,320 796,320 820,337 845,397 869,432 918,458 942,431 966,428 990,435 1014,433 1038,424 1063,441 1111,467 1135,477 1159,493 1184,502 1208,526 1232,568 1257,574 1281,588 1329,642 1353,650 1377,664 1426,685 1450,792 1474,856 1498,885 1522,892 1547,894 1571,883 1595,866 1619,857 1644,830 1668,819 1692,791 1740,741 1789,714 1813,697 1837,671 1861,637 1886,568 1934,487 1982,451 2031,430 2079,438 2128,435 2152,440 2176,449 2201,466 2225,467 2273,478 2297,464 2322,471 2370,474 2418,461 2443,446 2515,448 2539,461 2588,439 2612,430 2660,452 2685,450 2709,431 2733,416 2757,398 2781,398 2806,387 2830,389 2878,405 2902,418 2927,419 2975,412 2999,360 3024,345");
line(macd, my, "#b8b000", "46,578 70,624 95,665 143,730 168,753 192,762 240,761 264,752 313,731 337,723 361,710 385,685 409,655 458,580 482,538 506,492 555,408 603,348 628,323 652,310 676,301 724,295 748,296 796,303 820,310 869,348 918,386 966,401 1014,412 1038,415 1087,426 1135,443 1184,463 1208,475 1232,493 1305,540 1377,595 1426,627 1450,662 1498,738 1522,770 1547,795 1571,810 1595,821 1619,828 1668,828 1716,809 1765,781 1813,754 1837,738 1861,717 1886,687 1934,620 1982,562 2031,517 2079,487 2128,467 2176,460 2225,463 2273,466 2322,467 2370,469 2418,466 2467,459 2564,456 2612,448 2709,446 2757,431 2830,411 2878,407 2927,412 2975,412 2999,402 3024,390", 2);
hist.forEach((v, i) => {
    if (v > 516)
        rect(macd, barX(i) - 1, my(513), 2, my(v) - my(513), GREEN);
    else
        rect(macd, barX(i) - 1, my(v), 2, my(521) - my(v), "#dc1c28");
});
add(macd, "text", { class: "axis", x: 16, y: 22, textLength: 48 }, "0.49");
add(macd, "text", { class: "axis", x: 16, y: 257, textLength: 60 }, "-0.58");
```
